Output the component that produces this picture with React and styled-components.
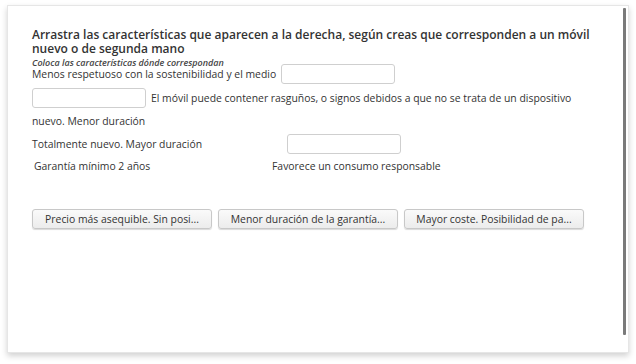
import React from "react";
import styled, { createGlobalStyle } from "styled-components";

const GlobalStyle = createGlobalStyle`
  html, body {
    margin: 0;
    padding: 0;
    background: #fff;
  }
  body {
    font-family: "Open Sans", "DejaVu Sans", sans-serif;
    color: #333;
  }
`;

const Page = styled.div`
  width: 636px;
  height: 364px;
  padding: 5px 7px 0 7px;
  box-sizing: border-box;
`;

const Card = styled.div`
  position: relative;
  width: 622px;
  height: 348px;
  box-sizing: border-box;
  background: #fff;
  border: 1px solid #e6e6e6;
  box-shadow: 0 3px 6px rgba(0, 0, 0, 0.18);
  padding: 22px 24px 0 24px;
`;

const ScrollThumb = styled.div`
  position: absolute;
  top: 2px;
  right: 2px;
  width: 3px;
  height: 327px;
  background: #7a7a7a;
  border-radius: 1px;
`;

const Title = styled.h2`
  margin: 0;
  font-size: 12px;
  font-weight: 600;
  line-height: 14px;
  color: #333;
`;

const Hint = styled.div`
  font-size: 9px;
  font-style: italic;
  font-weight: 600;
  line-height: 8px;
  color: #444;
  margin-top: 3px;
`;

const Line = styled.div`
  display: flex;
  align-items: center;
  min-height: 17px;
  gap: ${(p) => p.$gap ?? 5}px;
  font-size: 10.4px;
  line-height: 12px;
  margin-top: ${(p) => p.$top || 0}px;
  padding-left: ${(p) => p.$indent || 0}px;
`;

const Label = styled.span`
  white-space: nowrap;
  width: ${(p) => (p.$width ? `${p.$width}px` : "auto")};
`;

const DropBox = styled.span`
  display: inline-block;
  width: 114px;
  height: 20px;
  box-sizing: border-box;
  border: 1px solid #cfcfcf;
  border-radius: 3px;
  background: #fff;
  flex-shrink: 0;
`;

const Buttons = styled.div`
  display: flex;
  gap: 6px;
  margin-top: 35px;
`;

const Chip = styled.button`
  width: 180px;
  height: 20px;
  padding: 0 6px;
  font-family: inherit;
  font-size: 10.4px;
  color: #333;
  background: linear-gradient(#fafafa, #ececec);
  border: 1px solid #c8c8c8;
  border-radius: 3px;
  box-shadow: 0 1px 1px rgba(0, 0, 0, 0.15);
  white-space: nowrap;
  overflow: hidden;
  cursor: grab;
`;

const chips = [
  "Precio más asequible. Sin posi...",
  "Menor duración de la garantía...",
  "Mayor coste. Posibilidad de pa...",
];

export default function App() {
  return (
    <>
      <GlobalStyle />
      <Page>
        <Card>
          <ScrollThumb />
          <Title>
            Arrastra las características que aparecen a la derecha, según creas
            que corresponden a un móvil nuevo o de segunda mano
          </Title>
          <Hint>Coloca las características dónde correspondan</Hint>
          <Line $top={-3}>
            <Label>Menos respetuoso con la sostenibilidad y el medio</Label>
            <DropBox />
          </Line>
          <Line $top={4}>
            <DropBox />
            <Label>
              El móvil puede contener rasguños, o signos debidos a que no se
              trata de un dispositivo
            </Label>
          </Line>
          <Line $top={4}>
            <Label>nuevo. Menor duración</Label>
          </Line>
          <Line $top={5}>
            <Label $width={250}>Totalmente nuevo. Mayor duración</Label>
            <DropBox />
          </Line>
          <Line $top={3} $indent={2} $gap={0}>
            <Label $width={238}>Garantía mínimo 2 años</Label>
            <Label>Favorece un consumo responsable</Label>
          </Line>
          <Buttons>
            {chips.map((c) => (
              <Chip key={c}>{c}</Chip>
            ))}
          </Buttons>
        </Card>
      </Page>
    </>
  );
}
